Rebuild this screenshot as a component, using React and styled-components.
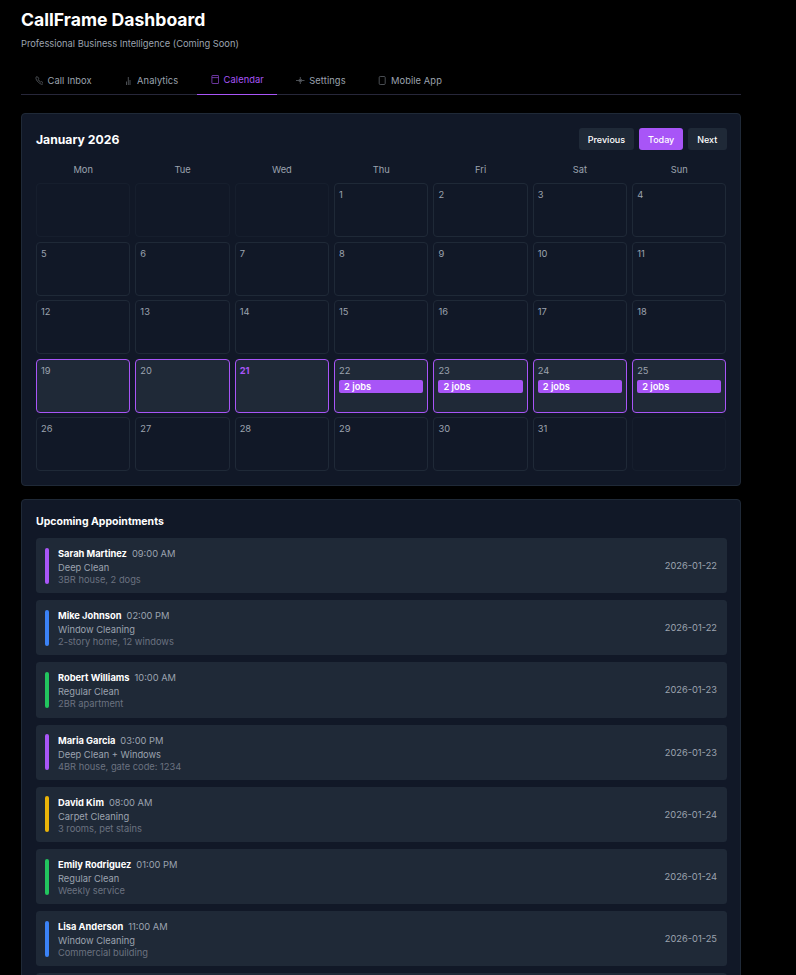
import React from 'react';
import styled, { createGlobalStyle } from 'styled-components';

const GlobalStyle = createGlobalStyle`
    html, body {
        margin: 0;
        height: 975px;
        overflow: hidden;
        background: #000;
    }
    body {
        font-family: Inter, "Liberation Sans", sans-serif;
    }
`;

const Page = styled.div`
    width: 720px;
    padding: 8px 0 0 21px;
`;

const Title = styled.h1`
    margin: 0;
    font-size: 17.6px;
    line-height: 24px;
    font-weight: 700;
    color: #fff;
`;

const Subtitle = styled.p`
    margin: 6px 0 0;
    font-size: 9.3px;
    line-height: 12px;
    color: #9ca3af;
`;

const Tabs = styled.nav`
    display: flex;
    gap: 5.3px;
    margin-top: 17px;
    height: 27px;
    border-bottom: 1px solid #27273a;
`;

const Tab = styled.div`
    display: flex;
    align-items: center;
    gap: 4.5px;
    padding: ${(p) => (p.$active ? '0 13.5px 2px' : '0 13.5px')};
    margin-bottom: -1px;
    font-size: 9.3px;
    letter-spacing: 0.1px;
    color: ${(p) => (p.$active ? '#a855f7' : '#9ca3af')};
    border-bottom: 1px solid ${(p) => (p.$active ? '#a855f7' : 'transparent')};
`;

const TabIcon = styled.svg`
    width: 8.5px;
    height: 9px;
    fill: none;
    stroke: currentColor;
    stroke-width: 0.8;
    opacity: ${(p) => (p.$active ? 0.8 : 0.6)};
`;

const Card = styled.section`
    margin-top: ${(p) => p.$top}px;
    padding: 14px 13.5px 14px 14px;
    background: #111827;
    border: 1px solid #1f2937;
    border-radius: 4px;
`;

const CalendarHeader = styled.div`
    display: flex;
    align-items: center;
    justify-content: space-between;
    height: 22px;
`;

const Month = styled.h2`
    margin: 0;
    font-size: 12.2px;
    font-weight: 700;
    color: #fff;
`;

const Buttons = styled.div`
    display: flex;
    gap: 4.5px;
`;

const NavButton = styled.button`
    height: 22px;
    padding: 0 9.2px;
    border: 0;
    border-radius: 3px;
    font: 500 9px Inter, sans-serif;
    color: #fff;
    background: ${(p) => (p.$active ? '#a855f7' : '#1f2937')};
`;

const Weekdays = styled.div`
    display: grid;
    grid-template-columns: repeat(7, 1fr);
    gap: 5px;
    margin-top: 10px;
`;

const Weekday = styled.div`
    height: 20px;
    line-height: 20px;
    text-align: center;
    font-size: 9.3px;
    color: #9ca3af;
`;

const Grid = styled.div`
    display: grid;
    grid-template-columns: repeat(7, 1fr);
    grid-auto-rows: 54px;
    gap: 4.5px 5px;
    margin-top: 3px;
`;

const Day = styled.div`
    box-sizing: border-box;
    padding: 5px 4px 4px;
    border-radius: 4px;
    border: 1px solid ${(p) => (p.$week ? '#a855f7' : '#1f2937')};
    background: ${(p) => (p.$week ? '#1f2937' : 'transparent')};
    opacity: ${(p) => (p.$blank ? 0.4 : 1)};
`;

const DayNumber = styled.div`
    font-size: 9.3px;
    line-height: 12px;
    font-weight: ${(p) => (p.$today ? 700 : 400)};
    color: ${(p) => (p.$today ? '#a855f7' : '#9ca3af')};
`;

const Jobs = styled.div`
    margin-top: 3px;
    height: 13px;
    line-height: 13px;
    padding: 0 5px;
    border-radius: 2px;
    background: #a855f7;
    color: #fff;
    font-size: 9.3px;
    font-weight: 600;
`;

const ListTitle = styled.h3`
    margin: 0;
    height: 23px;
    padding-top: 1px;
    font-size: 10.5px;
    line-height: 14px;
    font-weight: 700;
    color: #fff;
`;

const List = styled.div`
    display: flex;
    flex-direction: column;
    gap: 7px;
`;

const Item = styled.div`
    display: flex;
    align-items: center;
    gap: 9px;
    box-sizing: border-box;
    height: 55.2px;
    padding: 0 9.5px 0 9px;
    background: #1f2937;
    border-radius: 3.5px;
`;

const Bar = styled.div`
    width: 4px;
    height: 36px;
    border-radius: 2px;
    background: ${(p) => p.$color};
`;

const Info = styled.div`
    flex: 1;
    padding-top: 2px;
`;

const NameRow = styled.div`
    display: flex;
    gap: 5px;
    align-items: baseline;
    line-height: 13px;
`;

const Name = styled.span`
    font-size: 9.3px;
    font-weight: 700;
    color: #fff;
`;

const Time = styled.span`
    font-size: 9.3px;
    color: #9ca3af;
`;

const Service = styled.div`
    margin-top: 2px;
    font-size: 9.3px;
    line-height: 12px;
    color: #9ca3af;
`;

const Note = styled.div`
    font-size: 9.3px;
    line-height: 12px;
    color: #6b7280;
`;

const DateText = styled.div`
    font-size: 9.3px;
    color: #9ca3af;
`;

const tabs = [
    {
        label: 'Call Inbox',
        icon: <path d="M1 1.2C1.6.6 2.3.5 2.7 1L3.6 2.3C3.9 2.7 3.7 3.1 3.3 3.5C3.6 4.6 4.6 5.6 5.6 6C6 5.6 6.4 5.4 6.8 5.7L7.9 6.6C8.3 7 8.2 7.7 7.6 8.2C5.9 9 .2 4.6 1 1.2Z" />,
    },
    { label: 'Analytics', icon: <path d="M2.5 5.5V9M4.3 1V9M6 4V9" /> },
    {
        label: 'Calendar',
        active: true,
        icon: (
            <>
                <rect x="0.9" y="0.5" width="6.7" height="8" rx="0.5" />
                <path d="M0.9 2.6H7.6" />
            </>
        ),
    },
    { label: 'Settings', icon: <path d="M0 4.5H8.5M4.3 1V8M2.8 3L5.8 6M5.8 3L2.8 6" /> },
    { label: 'Mobile App', icon: <rect x="1.2" y="0.5" width="6" height="8" rx="1" /> },
];

const weekdays = ['Mon', 'Tue', 'Wed', 'Thu', 'Fri', 'Sat', 'Sun'];

const appointments = [
    { name: 'Sarah Martinez', time: '09:00 AM', service: 'Deep Clean', note: '3BR house, 2 dogs', date: '2026-01-22', color: '#a855f7' },
    { name: 'Mike Johnson', time: '02:00 PM', service: 'Window Cleaning', note: '2-story home, 12 windows', date: '2026-01-22', color: '#3b82f6' },
    { name: 'Robert Williams', time: '10:00 AM', service: 'Regular Clean', note: '2BR apartment', date: '2026-01-23', color: '#22c55e' },
    { name: 'Maria Garcia', time: '03:00 PM', service: 'Deep Clean + Windows', note: '4BR house, gate code: 1234', date: '2026-01-23', color: '#a855f7' },
    { name: 'David Kim', time: '08:00 AM', service: 'Carpet Cleaning', note: '3 rooms, pet stains', date: '2026-01-24', color: '#eab308' },
    { name: 'Emily Rodriguez', time: '01:00 PM', service: 'Regular Clean', note: 'Weekly service', date: '2026-01-24', color: '#22c55e' },
    { name: 'Lisa Anderson', time: '11:00 AM', service: 'Window Cleaning', note: 'Commercial building', date: '2026-01-25', color: '#3b82f6' },
];

// Jan 2026 starts on a Thursday, so three blanks up front and one at the end
const days = [null, null, null, ...Array.from({ length: 31 }, (_, i) => i + 1), null];

export default function App() {
    return (
        <Page>
            <GlobalStyle />
            <Title>CallFrame Dashboard</Title>
            <Subtitle>Professional Business Intelligence (Coming Soon)</Subtitle>
            <Tabs>
                {tabs.map((t) => (
                    <Tab key={t.label} $active={t.active}>
                        <TabIcon viewBox="0 0 8.5 9" $active={t.active}>
                            {t.icon}
                        </TabIcon>
                        {t.label}
                    </Tab>
                ))}
            </Tabs>

            <Card $top={18}>
                <CalendarHeader>
                    <Month>January 2026</Month>
                    <Buttons>
                        <NavButton>Previous</NavButton>
                        <NavButton $active>Today</NavButton>
                        <NavButton>Next</NavButton>
                    </Buttons>
                </CalendarHeader>
                <Weekdays>
                    {weekdays.map((d) => (
                        <Weekday key={d}>{d}</Weekday>
                    ))}
                </Weekdays>
                <Grid>
                    {days.map((d, i) =>
                        d === null ? (
                            <Day key={i} $blank />
                        ) : (
                            <Day key={i} $week={d >= 19 && d <= 25}>
                                <DayNumber $today={d === 21}>{d}</DayNumber>
                                {d >= 22 && d <= 25 && <Jobs>2 jobs</Jobs>}
                            </Day>
                        )
                    )}
                </Grid>
            </Card>

            <Card $top={13}>
                <ListTitle>Upcoming Appointments</ListTitle>
                <List>
                    {appointments.map((a) => (
                        <Item key={a.name}>
                            <Bar $color={a.color} />
                            <Info>
                                <NameRow>
                                    <Name>{a.name}</Name>
                                    <Time>{a.time}</Time>
                                </NameRow>
                                <Service>{a.service}</Service>
                                <Note>{a.note}</Note>
                            </Info>
                            <DateText>{a.date}</DateText>
                        </Item>
                    ))}
                    <Item />
                </List>
            </Card>
        </Page>
    );
}
